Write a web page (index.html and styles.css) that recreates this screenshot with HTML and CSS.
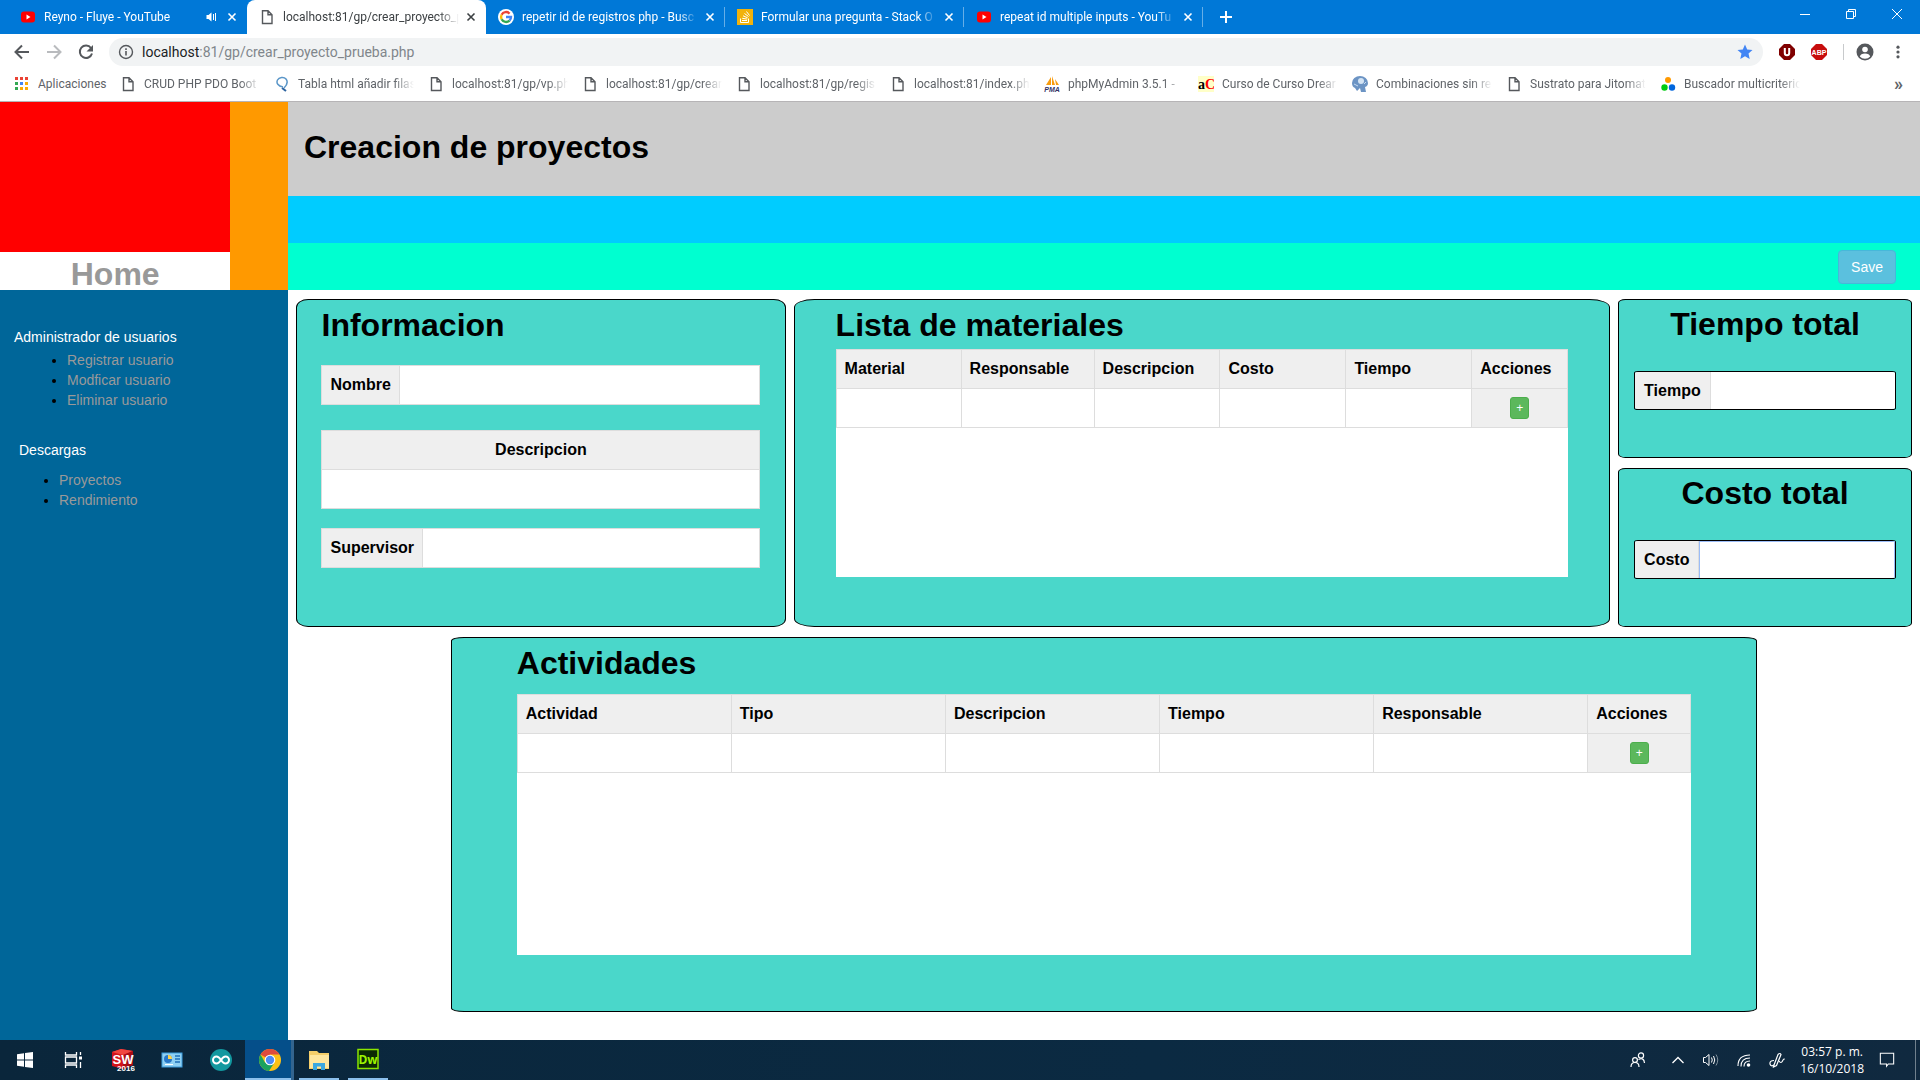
FILE: index.html
```html
<!DOCTYPE html>
<html lang="es">
<head>
<meta charset="utf-8">
<title>Creacion de proyectos</title>
<link rel="stylesheet" href="styles.css">
</head>
<body>
<svg class="symbols" aria-hidden="true">
  <symbol id="doc" viewBox="0 0 16 16"><path d="M3.500 1.700h5.500l4 4v8.800h-9.500z M9 1.700v4h4" fill="none" stroke="#55585c" stroke-width="1.400"/></symbol>
  <symbol id="yt" viewBox="0 0 16 16"><rect x="1" y="2.500" width="14" height="11" rx="3" fill="#f00"/><path d="M6.500 5.500v5l4-2.500z" fill="#fff"/></symbol>
  <symbol id="x" viewBox="0 0 16 16"><path d="M4.500 4.500l7 7M11.500 4.500l-7 7" stroke="currentColor" stroke-width="1.600" fill="none"/></symbol>
</svg>

<header class="browser">
  <div class="tabs">
    <div class="tab">
      <svg class="ico"><use href="#yt"/></svg>
      <span class="tab-title">Reyno - Fluye - YouTube</span>
      <svg class="ico" viewBox="0 0 16 16"><path d="M2.500 6h2l3-2.500v9L4.500 10h-2z" fill="#fff"/><path d="M9.500 5v6M11.500 4v8" stroke="#fff" fill="none"/></svg>
      <button class="close" aria-label="Cerrar"><svg class="ico"><use href="#x"/></svg></button>
    </div>
    <div class="tab active">
      <svg class="ico"><use href="#doc"/></svg>
      <span class="tab-title">localhost:81/gp/crear_proyecto_p</span>
      <button class="close" aria-label="Cerrar"><svg class="ico"><use href="#x"/></svg></button>
    </div>
    <div class="tab ruled">
      <svg class="ico" viewBox="0 0 16 16"><circle cx="8" cy="8" r="8" fill="#fff"/><g fill="none" stroke-width="2.400"><path d="M11.600 4.600A5 5 0 0 0 3.600 5.700" stroke="#ea4335"/><path d="M3.600 5.700a5 5 0 0 0 0 4.600" stroke="#fbbc05"/><path d="M3.600 10.300a5 5 0 0 0 8 1.200" stroke="#34a853"/><path d="M11.600 11.500A5 5 0 0 0 13 8H8" stroke="#4285f4"/></g></svg>
      <span class="tab-title">repetir id de registros php - Busc</span>
      <button class="close" aria-label="Cerrar"><svg class="ico"><use href="#x"/></svg></button>
    </div>
    <div class="tab ruled">
      <svg class="ico" viewBox="0 0 16 16"><rect width="16" height="16" fill="#f1b20c"/><g stroke="#fff" fill="none"><path d="M3.500 9.500v4h8v-4"/><path d="M5 11.500h5M5.200 9.300l5 .8M6 6.800l4.600 2M7.500 4.500l4 3M9.500 2.500l3 4"/></g></svg>
      <span class="tab-title">Formular una pregunta - Stack O</span>
      <button class="close" aria-label="Cerrar"><svg class="ico"><use href="#x"/></svg></button>
    </div>
    <div class="tab ruled">
      <svg class="ico"><use href="#yt"/></svg>
      <span class="tab-title">repeat id multiple inputs - YouTu</span>
      <button class="close" aria-label="Cerrar"><svg class="ico"><use href="#x"/></svg></button>
    </div>
    <button class="new-tab" aria-label="Nueva pestaña"><svg class="ico" viewBox="0 0 16 16"><path d="M8 2v12M2 8h12" stroke="#fff" stroke-width="2"/></svg></button>
    <div class="win-controls">
      <button aria-label="Minimizar"><svg viewBox="0 0 12 12"><path d="M1 6.500h10" stroke="#fff"/></svg></button>
      <button aria-label="Restaurar"><svg viewBox="0 0 12 12"><path d="M1.500 3.500h7v7h-7zM3.500 3.500v-2h7v7h-2" stroke="#fff" fill="none"/></svg></button>
      <button aria-label="Cerrar ventana"><svg viewBox="0 0 12 12"><path d="M1 1l10 10M11 1L1 11" stroke="#fff"/></svg></button>
    </div>
  </div>

  <div class="toolbar">
    <div class="nav">
      <button aria-label="Atrás"><svg viewBox="0 0 16 16"><path d="M15 8H2M8 1.500L1.500 8L8 14.500" fill="none" stroke="#55585c" stroke-width="2"/></svg></button>
      <button aria-label="Adelante"><svg viewBox="0 0 16 16"><path d="M1 8h13M8 1.500L14.500 8L8 14.500" fill="none" stroke="#b9bbbe" stroke-width="2"/></svg></button>
      <button aria-label="Recargar"><svg viewBox="0 0 16 16"><path d="M13 4A6.200 6.200 0 1 0 14 9.500" fill="none" stroke="#55585c" stroke-width="2"/><path d="M15 1v6.500H8.500z" fill="#55585c"/></svg></button>
    </div>
    <div class="omnibox">
      <svg class="info" viewBox="0 0 16 16"><circle cx="8" cy="8" r="6.500" fill="none" stroke="#55585c" stroke-width="1.400"/><path d="M8 7v4.500M8 4.300v1.600" stroke="#55585c" stroke-width="1.600"/></svg>
      <div class="url"><b>localhost</b>:81/gp/crear_proyecto_prueba.php</div>
      <svg class="ico" viewBox="0 0 16 16"><path d="M8 .5l2.200 5 5.300.5-4 3.600 1.200 5.400L8 12.200 3.300 15l1.200-5.400-4-3.600 5.300-.5z" fill="#4285f4"/></svg>
    </div>
    <div class="extensions">
      <svg class="ico" viewBox="0 0 16 16"><path d="M5 0h6l5 5v6l-5 5H5l-5-5V5z" fill="#800000"/><path d="M5.800 4v5a2.200 2.200 0 0 0 4.400 0V4" fill="none" stroke="#fff" stroke-width="2"/></svg>
      <svg class="ico" viewBox="0 0 16 16"><path d="M5 0h6l5 5v6l-5 5H5l-5-5V5z" fill="#c70d0d"/><text x="8" y="11" class="abp">ABP</text></svg>
      <span class="rule"></span>
      <svg class="avatar" viewBox="0 0 18 18"><circle cx="9" cy="9" r="8.500" fill="#55585c"/><circle cx="9" cy="6.500" r="2.800" fill="#fff"/><path d="M3.800 13.500a5.300 3.600 0 0 1 10.400 0a7 7 0 0 1-10.400 0" fill="#fff"/></svg>
      <svg class="ico" viewBox="0 0 16 16"><g fill="#55585c"><circle cx="8" cy="3.200" r="1.600"/><circle cx="8" cy="8" r="1.600"/><circle cx="8" cy="12.800" r="1.600"/></g></svg>
    </div>
  </div>

  <nav class="bookmarks">
    <a href="#" class="apps"><svg class="ico" viewBox="0 0 16 16"><path d="M1 1h3v3H1zM6 1h3v3H6zM11 1h3v3h-3z" fill="#ea4335"/><path d="M1 6h3v3H1zM1 11h3v3H1z" fill="#34a853"/><path d="M6 6h3v3H6z" fill="#4285f4"/><path d="M11 6h3v3h-3zM6 11h3v3H6zM11 11h3v3h-3z" fill="#fbab05"/></svg><span>Aplicaciones</span></a>
    <a href="#"><svg class="ico"><use href="#doc"/></svg><span>CRUD PHP PDO Boot</span></a>
    <a href="#"><svg class="ico" viewBox="0 0 16 16"><path d="M9 11C4 10 2 7 3.500 4S10 .5 12 3s1 6-2 9" fill="none" stroke="#5a96c8" stroke-width="1.500"/><path d="M8 12l4 3" stroke="#2d64a0" stroke-width="2"/></svg><span>Tabla html añadir filas</span></a>
    <a href="#"><svg class="ico"><use href="#doc"/></svg><span>localhost:81/gp/vp.ph</span></a>
    <a href="#"><svg class="ico"><use href="#doc"/></svg><span>localhost:81/gp/crear</span></a>
    <a href="#"><svg class="ico"><use href="#doc"/></svg><span>localhost:81/gp/regis</span></a>
    <a href="#"><svg class="ico"><use href="#doc"/></svg><span>localhost:81/index.ph</span></a>
    <a href="#"><svg class="ico" viewBox="0 0 16 16"><path d="M7 1v8H2zM8 0l3 9H8zM11 3l4 6h-3z" fill="#f89c0e"/><text x="8" y="16" class="pma">PMA</text></svg><span>phpMyAdmin 3.5.1 -</span></a>
    <a href="#"><svg class="ico" viewBox="0 0 16 16"><rect width="16" height="16" fill="#ffffc8"/><text x="0" y="13" class="ac">a<tspan fill="#f00">C</tspan></text></svg><span>Curso de Curso Drear</span></a>
    <a href="#"><svg class="ico" viewBox="0 0 16 16"><path d="M8 0a8 7 0 0 1 8 7q0 3-3 4l1 5H9l-1-4-3 3-2-3Q0 11 0 7a8 7 0 0 1 8-7" fill="#6c94c4"/><circle cx="9" cy="5" r="3" fill="#d4e4f4"/><path d="M2 8l4 2M12 8l2-2" stroke="#c4daf0"/></svg><span>Combinaciones sin re</span></a>
    <a href="#"><svg class="ico"><use href="#doc"/></svg><span>Sustrato para Jitomat</span></a>
    <a href="#"><svg class="ico" viewBox="0 0 16 16"><circle cx="8" cy="4" r="3" fill="#f90"/><circle cx="4.500" cy="11.500" r="3.200" fill="#0c1"/><circle cx="12" cy="11.500" r="3.200" fill="#06d"/></svg><span>Buscador multicriteric</span></a>
    <button class="more" aria-label="Más marcadores">»</button>
  </nav>
</header>

<div class="site">
  <aside class="side">
    <div class="brand">
      <div class="logo"></div>
      <a class="home" href="#">Home</a>
    </div>
    <nav class="menu">
      <h2>Administrador de usuarios</h2>
      <ul>
        <li><a href="#">Registrar usuario</a></li>
        <li><a href="#">Modficar usuario</a></li>
        <li><a href="#">Eliminar usuario</a></li>
      </ul>
      <h2 class="downloads">Descargas</h2>
      <ul class="downloads">
        <li><a href="#">Proyectos</a></li>
        <li><a href="#">Rendimiento</a></li>
      </ul>
    </nav>
  </aside>

  <main class="main">
    <div class="title-bar"><h1>Creacion de proyectos</h1></div>
    <div class="blue-bar"></div>
    <div class="action-bar"><button class="btn-save">Save</button></div>

    <form class="panels">
      <section class="panel info-panel">
        <h1>Informacion</h1>
        <div class="field"><label for="nombre">Nombre</label><input id="nombre" type="text"></div>
        <div class="field stacked"><label for="descripcion">Descripcion</label><input id="descripcion" type="text"></div>
        <div class="field"><label for="supervisor">Supervisor</label><input id="supervisor" type="text"></div>
      </section>

      <section class="panel materials">
        <h1>Lista de materiales</h1>
        <div class="sheet">
          <table>
            <colgroup><col class="m-first"><col class="m-resp"><col><col><col><col class="m-act"></colgroup>
            <thead><tr><th>Material</th><th>Responsable</th><th>Descripcion</th><th>Costo</th><th>Tiempo</th><th>Acciones</th></tr></thead>
            <tbody><tr>
              <td><input type="text" aria-label="Material"></td>
              <td><input type="text" aria-label="Responsable"></td>
              <td><input type="text" aria-label="Descripcion"></td>
              <td><input type="text" aria-label="Costo"></td>
              <td><input type="text" aria-label="Tiempo"></td>
              <td class="act"><button type="button" class="btn-add">+</button></td>
            </tr></tbody>
          </table>
        </div>
      </section>

      <div class="totals">
        <section class="panel total">
          <h1>Tiempo total</h1>
          <div class="field"><label for="tiempo">Tiempo</label><input id="tiempo" type="text"></div>
        </section>
        <section class="panel total">
          <h1>Costo total</h1>
          <div class="field"><label for="costo">Costo</label><input id="costo" class="focused" type="text"></div>
        </section>
      </div>

      <section class="panel activities">
        <h1>Actividades</h1>
        <div class="sheet">
          <table>
            <colgroup><col><col><col><col><col><col class="a-act"></colgroup>
            <thead><tr><th>Actividad</th><th>Tipo</th><th>Descripcion</th><th>Tiempo</th><th>Responsable</th><th>Acciones</th></tr></thead>
            <tbody><tr>
              <td><input type="text" aria-label="Actividad"></td>
              <td><input type="text" aria-label="Tipo"></td>
              <td><input type="text" aria-label="Descripcion"></td>
              <td><input type="text" aria-label="Tiempo"></td>
              <td><input type="text" aria-label="Responsable"></td>
              <td class="act"><button type="button" class="btn-add">+</button></td>
            </tr></tbody>
          </table>
        </div>
      </section>
    </form>
  </main>
</div>

<footer class="taskbar">
  <div class="task-apps">
    <button aria-label="Inicio"><svg viewBox="0 0 24 24"><path d="M4 6.200l7-1v6.300H4zM12 5l8-1v7.500h-8zM4 12.500h7v6.300l-7-1zM12 12.500h8V20l-8-1z" fill="#fff"/></svg></button>
    <button aria-label="Vista de tareas"><svg viewBox="0 0 24 24"><path d="M3.500 4v3h11V4M3.500 20v-3h11v3M3.500 9h11v6h-11zM18.500 4v3M18.500 14v6" fill="none" stroke="#fff" stroke-width="1.300"/><path d="M17 8.500h3v3h-3z" fill="#fff"/></svg></button>
    <button aria-label="SolidWorks"><svg viewBox="0 0 24 24"><path d="M1 4l9-3 12 2v14l-10 4L1 18z" fill="#d3141c"/><path d="M1 4l9-3 12 2-10 4z" fill="#f0453f"/><path d="M12 7l10-4v14l-10 4z" fill="#a80d14"/><text x="12" y="16" class="sw">SW</text><text x="15" y="23" class="sw-year">2016</text></svg></button>
    <button aria-label="Panel de control"><svg viewBox="0 0 24 24"><rect x="2" y="5" width="20" height="14" fill="#8fd0f2" stroke="#3a9bdc"/><circle cx="8" cy="11" r="4" fill="#2877c8"/><path d="M8 11V7a4 4 0 0 1 4 4z" fill="#ffd24a"/><path d="M15 8h5M15 11h5M15 14h5" stroke="#1f6fb8" stroke-width="1.500"/><path d="M5 16.500h8" stroke="#fff"/></svg></button>
    <button aria-label="Arduino"><svg viewBox="0 0 24 24"><circle cx="12" cy="12" r="11" fill="#12989f"/><path d="M12 12c-2-3-3-3.500-4.500-3.500a3.500 3.500 0 0 0 0 7C9 15.500 10 15 12 12s3-3.500 4.500-3.500a3.500 3.500 0 0 1 0 7C15 15.500 14 15 12 12" fill="none" stroke="#fff" stroke-width="2"/></svg></button>
    <button class="open current" aria-label="Chrome"><svg viewBox="0 0 24 24"><circle cx="12" cy="12" r="11" fill="#fbc116"/><path d="M12 12L2.500 6.500A11 11 0 0 1 21.500 6.500H12z" fill="#dd4b3e"/><path d="M2.500 6.500A11 11 0 0 0 11 23l5.500-8.500L7 14.500z" fill="#1aa260"/><circle cx="12" cy="12" r="5.300" fill="#fff"/><circle cx="12" cy="12" r="4.200" fill="#4c8bf5"/></svg></button>
    <button class="open" aria-label="Explorador"><svg viewBox="0 0 24 24"><path d="M2 3h8l2 2h10v16H2z" fill="#f5cf6a"/><path d="M3 7h19v13H3z" fill="#ffe79e"/><path d="M6 22v-7h12v7h-4v-3.500h-4V22z" fill="#3ca8df"/></svg></button>
    <button class="open" aria-label="Dreamweaver"><svg viewBox="0 0 24 24"><rect x="2" y="1.500" width="20" height="19" fill="#0c2a04" stroke="#8ce600" stroke-width="1.500"/><text x="12" y="16" class="dw">Dw</text></svg></button>
  </div>
  <div class="tray">
    <svg class="people" viewBox="0 0 16 16"><g fill="none" stroke="#fff" stroke-width="1.200"><circle cx="5" cy="8" r="2.400"/><path d="M1 15q0-4.500 4-4.500T9 15"/><circle cx="11" cy="3.500" r="2.600"/><path d="M8.500 7.500q5.500-2.500 6 3.500"/></g></svg>
    <svg viewBox="0 0 16 16"><path d="M2.500 11L8 5.500l5.500 5.500" fill="none" stroke="#fff" stroke-width="1.300"/></svg>
    <svg viewBox="0 0 16 16"><g fill="none" stroke="#fff"><path d="M.5 5.500h2l3.500-3v11l-3.500-3h-2z"/><path d="M8.500 5.500q1.500 2.500 0 5M10.500 4q2.500 4 0 8"/><path d="M13 2.500q3.500 5.500 0 11" stroke="#7f8f9c"/></g></svg>
    <svg viewBox="0 0 16 16"><g fill="none" stroke="#fff" stroke-width="1.100"><path d="M2 14Q2 3 14 3M5 14.500Q5 6 14 6M8 14.500Q8 9 14 9"/></g><circle cx="12.500" cy="13" r="1.800" fill="#fff"/></svg>
    <svg viewBox="0 0 16 16"><g fill="none" stroke="#fff" stroke-width="1.200"><path d="M5 13L9 2.500q2-2 3 0L7.500 13.500l-3 1.500z"/><path d="M5 8.500q-4.500 0-4 3.500 1 3 4 1M10 9q2 3 3.500 0t2-1.500"/></g></svg>
    <time class="clock">03:57 p. m.<br>16/10/2018</time>
    <svg viewBox="0 0 18 18"><path d="M1.500 1.500h15v12h-6l-2 2.500v-2.500h-7z" fill="none" stroke="#fff" stroke-width="1.200"/></svg>
  </div>
</footer>
</body>
</html>
```
FILE: styles.css
```css
* { box-sizing: border-box; }

body {
  margin: 0;
  min-height: 100vh;
  display: flex;
  flex-direction: column;
  font: 14px/20px "Liberation Sans", Arial, sans-serif;
  color: #000;
  background: #fff;
}

button { border: 0; padding: 0; background: none; font: inherit; color: inherit; }
a { color: inherit; text-decoration: none; }
svg { display: block; flex: none; }
.symbols { width: 0; height: 0; position: absolute; }
.ico { width: 16px; height: 16px; }

/* Browser window */
.browser {
  font: 12px/16px Roboto, "Open Sans", sans-serif;
  border-bottom: 1px solid #b6b4b6;
}

.tabs {
  display: flex;
  height: 34px;
  padding-left: 8px;
  background: #0078d7;
  color: #fff;
}
.tab {
  flex: 0 1 239px;
  min-width: 0;
  display: flex;
  align-items: center;
  gap: 8px;
  padding: 0 7px 0 12px;
}
.tab.ruled {
  background: linear-gradient(#66aee7, #66aee7) right center / 1px 20px no-repeat;
}
.tab.active {
  background: #fff;
  color: #3c4043;
  border-radius: 8px 8px 0 0;
}
.tab-title {
  flex: 1;
  min-width: 0;
  overflow: hidden;
  white-space: nowrap;
  mask-image: linear-gradient(to left, transparent, #000 20px);
}
.close { margin-left: -4px; }
.new-tab { padding: 0 15px; }
.win-controls { margin-left: auto; display: flex; }
.win-controls button { width: 46px; height: 28px; display: grid; place-items: center; }
.win-controls svg { width: 12px; height: 12px; }

.toolbar {
  display: flex;
  align-items: center;
  padding-top: 4px;
}
.nav { display: flex; gap: 16px; padding: 0 15px 0 14px; }
.nav svg { width: 16px; height: 16px; }
.omnibox {
  flex: 1;
  display: flex;
  align-items: center;
  gap: 8px;
  height: 28px;
  padding: 0 10px 0 9px;
  border-radius: 14px;
  background: #f1f3f4;
}
.info { width: 16px; height: 16px; }
.url { flex: 1; font-size: 14px; color: #80868b; }
.url b { font-weight: 400; color: #202124; }
.extensions { display: flex; align-items: center; gap: 16px; padding: 0 14px 0 16px; }
.rule { width: 1px; height: 16px; background: #c8cacc; }
.avatar { width: 18px; height: 18px; margin-left: -4px; }

.bookmarks {
  display: flex;
  align-items: center;
  height: 35px;
  padding-left: 14px;
  color: #5f6368;
}
.bookmarks a {
  flex: 0 1 154px;
  min-width: 0;
  display: flex;
  align-items: center;
  gap: 8px;
  padding-right: 14px;
}
.bookmarks .apps { flex-basis: 106px; padding-right: 0; }
.bookmarks span {
  flex: 1;
  overflow: hidden;
  white-space: nowrap;
  mask-image: linear-gradient(to left, transparent, #000 20px);
}
.bookmarks .apps span { mask-image: none; }
.more { margin-left: auto; padding-right: 17px; font-size: 18px; font-weight: bold; }

.abp { font: bold 7px "Liberation Sans", sans-serif; fill: #fff; text-anchor: middle; }
.pma { font: italic bold 7px "Liberation Sans", sans-serif; fill: #336; text-anchor: middle; }
.ac { font: bold 14px "Liberation Serif", serif; }

/* Page */
.site { flex: 1; display: flex; }

.side {
  flex: 0 0 15%;
  display: flex;
  flex-direction: column;
  background: #069;
}
.brand {
  height: 188px;
  display: flex;
  flex-direction: column;
  padding-right: 20%;
  background: #f90;
}
.logo { flex: 1; background: #f00; }
.home {
  padding-top: 6px;
  font-size: 32px;
  line-height: 32px;
  font-weight: bold;
  text-align: center;
  color: #999;
  background: #fff;
}
.menu { padding: 37px 14px 0; }
.menu h2 { margin: 0; font: inherit; color: #fff; }
.menu ul { margin: 3px 0 30px; padding-left: 53px; }
.menu li a { color: #999; }
.menu h2.downloads { padding-left: 5px; }
.menu ul.downloads { margin-top: 10px; padding-left: 45px; }

.main { flex: 1; min-width: 0; }
h1 { margin: 0; font-size: 32px; line-height: 36px; font-weight: bold; }
.title-bar { height: 94px; padding: 27px 16px 0; background: #ccc; }
.blue-bar { height: 47px; background: #0cf; }
.action-bar {
  height: 47px;
  display: flex;
  justify-content: flex-end;
  align-items: center;
  padding-right: 24px;
  background: #00ffd0;
}
.btn-save {
  height: 34px;
  padding: 0 12px;
  border: 1px solid #46b8da;
  border-radius: 4px;
  background: #5bc0de;
  color: #fff;
}

.panels {
  display: grid;
  grid-template-columns: minmax(0, 30fr) minmax(0, 50fr) minmax(0, 18fr);
  gap: 10px 8px;
  padding: 9px 8px 28px;
}
.panel {
  border: 1px solid #000;
  border-radius: 2.5%;
  background: #4ad7ca;
  padding-top: 7px;
}

.field {
  display: flex;
  border: 1px solid #ddd;
  font-size: 16px;
  line-height: 22px;
}
.field label {
  padding: 8px;
  font-weight: bold;
  background: #efefef;
  border-right: 1px solid #ddd;
}
.field input { flex: 1; min-width: 0; }
input { border: 0; padding: 0 8px; background: #fff; font: inherit; outline: 0; }

.info-panel { padding-left: 5%; padding-right: 5%; min-height: 328px; }
.info-panel h1 { margin-bottom: 22px; }
.info-panel .stacked { flex-direction: column; margin: 25px 0 19px; }
.stacked label { text-align: center; border-right: 0; border-bottom: 1px solid #ddd; }
.stacked input { flex: none; height: 38px; }

.materials { padding-left: 5%; padding-right: 5%; }
.materials .sheet { margin-top: 6px; min-height: 228px; }
.sheet { background: #fff; }
table { width: 100%; table-layout: fixed; border-collapse: collapse; font-size: 16px; line-height: 22px; }
th, td { border: 1px solid #ddd; }
th { padding: 8px; text-align: left; background: #efefef; }
td { height: 39px; padding: 0; }
td input { display: block; width: 100%; height: 38px; }
.act { background: #efefef; text-align: center; }
.m-first { width: 125px; }
.m-resp { width: 133px; }
.m-act { width: 96px; }
.a-act { width: 103px; }
.btn-add {
  width: 19px;
  height: 22px;
  border: 1px solid #4cae4c;
  border-radius: 3px;
  background: #5cb85c;
  color: #fff;
  font-size: 12px;
  line-height: 18px;
  vertical-align: middle;
}

.totals {
  display: grid;
  grid-template: 1fr 1fr / minmax(0, 1fr);
  gap: 10px;
}
.total { padding: 6px 15px 0; text-align: center; }
.total .field {
  margin-top: 29px;
  border-color: #000;
  border-radius: 4px / 2px;
  overflow: hidden;
  line-height: 21px;
}
.total label { padding: 8px 9px; }
.focused { box-shadow: inset 1px 1px #9bbcf7, inset -1px 0 #9bbcf7; }

.activities {
  grid-column: 1 / -1;
  justify-self: center;
  width: 80.8%;
  min-height: 375px;
  border-radius: 1%;
  padding-left: 4%;
  padding-right: 4%;
}
.activities .sheet { margin-top: 13px; min-height: 261px; }

/* Taskbar */
.taskbar {
  height: 40px;
  display: flex;
  justify-content: space-between;
  background: linear-gradient(90deg, #0a263b, #0b2a42 60%, #10293f);
  color: #fff;
  font: 12px/17px "Open Sans", "Noto Sans", sans-serif;
}
.task-apps { display: flex; }
.task-apps button { width: 49px; display: grid; place-items: center; }
.task-apps svg { width: 24px; height: 24px; }
.task-apps .open { background: linear-gradient(#8cc0ec, #8cc0ec) center bottom / 40px 2px no-repeat; }
.task-apps .current {
  background: linear-gradient(#8cc0ec, #8cc0ec) center bottom / 100% 2px no-repeat, #054f8a;
  box-shadow: inset -3px 0 #33658f;
}
.sw { font: bold 13px "Liberation Sans", sans-serif; fill: #fff; text-anchor: middle; }
.sw-year { font: bold 8px "Liberation Sans", sans-serif; fill: #fff; text-anchor: middle; }
.dw { font: bold 12px "Open Sans", sans-serif; fill: #9cf600; text-anchor: middle; }
.tray {
  display: flex;
  align-items: center;
  gap: 17px;
  padding-right: 20px;
  margin-right: 4px;
  border-right: 1px solid #70808d;
}
.tray svg { width: 16px; height: 16px; }
.tray .people { margin-right: 7px; }
.clock { margin: 0 -2px; text-align: center; }
```
